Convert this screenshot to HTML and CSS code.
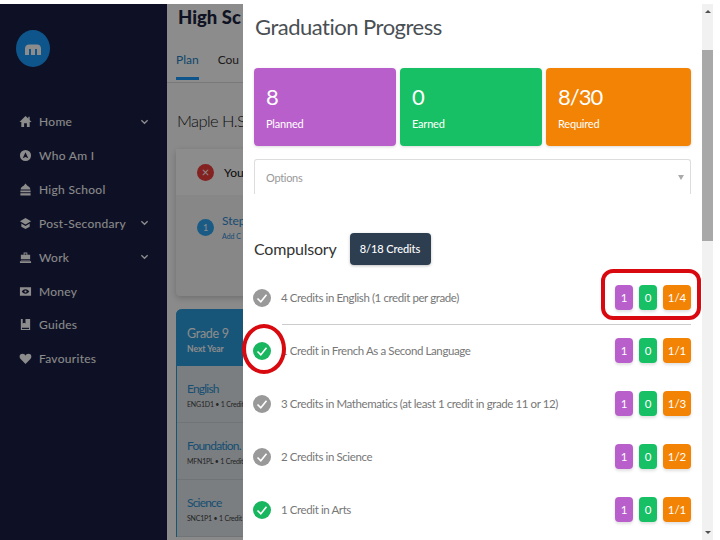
FILE: index.html
```html
<!DOCTYPE html>
<html lang="en">
<head>
    <meta charset="UTF-8">
    <meta name="viewport" content="width=device-width, initial-scale=1.0">
    <title>Graduation Progress</title>
    <link rel="stylesheet" href="styles.css">
</head>
<body>
    <div class="page">
        <!-- Dimmed app behind the modal -->
        <div class="behind">
            <aside class="sidebar">
                <div class="logo">
                    <svg viewBox="0 0 20 14" width="20" height="14"><path d="M2 13V6.5C2 4 4 2.5 6 2.5h8c2.4 0 4 1.600 4 4V13h-4V7h-2v6H8V7H6v6z" fill="#fff"/></svg>
                </div>
                <nav class="nav">
                    <div class="nav-item">
                        <svg class="nav-icon" viewBox="0 0 14 14"><path d="M7 1 0.500 7.500H2.500V13H5.500V9H8.500V13H11.500V7.500H13.500L11.500 5.300V2H10V3.800z"/></svg>
                        <span>Home</span>
                        <svg class="chev" viewBox="0 0 10 6"><path d="M1.500 1 5 4.500 8.500 1"/></svg>
                    </div>
                    <div class="nav-item">
                        <svg class="nav-icon" viewBox="0 0 14 14"><path fill-rule="evenodd" d="M7 1a6 6 0 1 0 0 12A6 6 0 0 0 7 1zM7 3.500 10 10 7 8.500 4 10z"/></svg>
                        <span>Who Am I</span>
                    </div>
                    <div class="nav-item">
                        <svg class="nav-icon" viewBox="0 0 14 14"><path d="M7 0.500 9 3C11 3.800 12 5 12.300 7H1.700C2 5 3 3.800 5 3zM1.500 8.200H12.500V10H1.500zM1.500 11H12.500V13.500H1.500z"/></svg>
                        <span>High School</span>
                    </div>
                    <div class="nav-item">
                        <svg class="nav-icon" viewBox="0 0 14 14"><path d="M7 1 13 4.500 7 8 1 4.500zM2.500 7 7 9.600 11.500 7V10.500L7 13 2.500 10.500z"/></svg>
                        <span>Post-Secondary</span>
                        <svg class="chev" viewBox="0 0 10 6"><path d="M1.500 1 5 4.500 8.500 1"/></svg>
                    </div>
                    <div class="nav-item">
                        <svg class="nav-icon" viewBox="0 0 14 14"><path d="M5 1.500H9V4H8V2.700H6V4H5zM2 4H12V8.500H2zM1 11H13V13H1zM2 9.300H12V10.300H2z"/></svg>
                        <span>Work</span>
                        <svg class="chev" viewBox="0 0 10 6"><path d="M1.500 1 5 4.500 8.500 1"/></svg>
                    </div>
                    <div class="nav-item">
                        <svg class="nav-icon" viewBox="0 0 14 14"><path fill-rule="evenodd" d="M1 2.500H13V11.500H1zM7 4.500C5 4.500 3.600 6 3 7 3.600 8 5 9.500 7 9.500S10.400 8 11 7C10.400 6 9 4.500 7 4.500zM7 5.800a1.200 1.200 0 1 1 0 2.400 1.200 1.200 0 0 1 0-2.400z"/></svg>
                        <span>Money</span>
                    </div>
                    <div class="nav-item">
                        <svg class="nav-icon" viewBox="0 0 14 14"><path fill-rule="evenodd" d="M2 1H4V6L5.500 5 7 6V1H12V13H2zM3.200 10.500V11.800H10.800V10.500z"/></svg>
                        <span>Guides</span>
                    </div>
                    <div class="nav-item">
                        <svg class="nav-icon" viewBox="0 0 14 14"><path d="M7 13 1.500 7.300C0 5.500 0.500 2 3.800 2 5.300 2 6.400 2.800 7 4 7.600 2.800 8.700 2 10.200 2 13.500 2 14 5.500 12.500 7.300z"/></svg>
                        <span>Favourites</span>
                    </div>
                </nav>
            </aside>
            <main class="plan">
                <div class="plan-head">
                    <div class="plan-title">High Sc</div>
                    <div class="tabs">
                        <span class="tab tab-active">Plan</span>
                        <span class="tab">Cou</span>
                    </div>
                </div>
                <div class="plan-body">
                    <div class="school">Maple H.S</div>
                    <div class="alert-card">
                        <div class="alert-top">
                            <span class="alert-icon">&times;</span>
                            <span>You</span>
                        </div>
                        <div class="alert-step">
                            <span class="step-num">1</span>
                            <div>
                                <div class="step-title">Step</div>
                                <div class="step-sub">Add C</div>
                            </div>
                        </div>
                    </div>
                    <div class="grade">
                        <div class="grade-head">
                            <div class="grade-name">Grade 9</div>
                            <div class="grade-when">Next Year</div>
                        </div>
                        <div class="course">
                            <div class="course-name">English</div>
                            <div class="course-sub">ENG1D1 &bull; 1 Credit</div>
                        </div>
                        <div class="course">
                            <div class="course-name">Foundation.</div>
                            <div class="course-sub">MFN1PL &bull; 1 Credit</div>
                        </div>
                        <div class="course">
                            <div class="course-name">Science</div>
                            <div class="course-sub">SNC1P1 &bull; 1 Credit</div>
                        </div>
                    </div>
                </div>
            </main>
        </div>

        <section class="modal">
            <h1 class="modal-title">Graduation Progress</h1>
            <div class="stats">
                <div class="stat stat-planned"><div class="stat-num">8</div><div class="stat-label">Planned</div></div>
                <div class="stat stat-earned"><div class="stat-num">0</div><div class="stat-label">Earned</div></div>
                <div class="stat stat-required"><div class="stat-num">8/30</div><div class="stat-label">Required</div></div>
            </div>
            <div class="options"><span>Options</span><i class="caret"></i></div>
            <div class="group-head">
                <h2>Compulsory</h2>
                <span class="credits">8/18 Credits</span>
            </div>
            <div class="req req-line">
                <span class="check check-grey"><svg viewBox="0 0 18 18"><path d="M4.500 9.500 7.800 12.800 13.500 5.800"/></svg></span>
                <span class="req-text">4 Credits in English (1 credit per grade)</span>
                <span class="pill pill-p">1</span><span class="pill pill-g">0</span><span class="pill pill-o">1/4</span>
            </div>
            <div class="req">
                <span class="check check-green"><svg viewBox="0 0 18 18"><path d="M4.500 9.500 7.800 12.800 13.500 5.800"/></svg></span>
                <span class="req-text">1 Credit in French As a Second Language</span>
                <span class="pill pill-p">1</span><span class="pill pill-g">0</span><span class="pill pill-o">1/1</span>
            </div>
            <div class="req">
                <span class="check check-grey"><svg viewBox="0 0 18 18"><path d="M4.500 9.500 7.800 12.800 13.500 5.800"/></svg></span>
                <span class="req-text">3 Credits in Mathematics (at least 1 credit in grade 11 or 12)</span>
                <span class="pill pill-p">1</span><span class="pill pill-g">0</span><span class="pill pill-o">1/3</span>
            </div>
            <div class="req">
                <span class="check check-grey"><svg viewBox="0 0 18 18"><path d="M4.500 9.500 7.800 12.800 13.500 5.800"/></svg></span>
                <span class="req-text">2 Credits in Science</span>
                <span class="pill pill-p">1</span><span class="pill pill-g">0</span><span class="pill pill-o">1/2</span>
            </div>
            <div class="req">
                <span class="check check-green"><svg viewBox="0 0 18 18"><path d="M4.500 9.500 7.800 12.800 13.500 5.800"/></svg></span>
                <span class="req-text">1 Credit in Arts</span>
                <span class="pill pill-p">1</span><span class="pill pill-g">0</span><span class="pill pill-o">1/1</span>
            </div>
        </section>

        <div class="scrollbar">
            <div class="scroll-btn"><i class="arrow-up"></i></div>
            <div class="scroll-thumb"></div>
            <div class="scroll-rest"><i class="arrow-down"></i></div>
        </div>

        <!-- Red hand-drawn marks on top of the screenshot -->
        <div class="mark-box"></div>
        <div class="mark-ring"></div>
    </div>
</body>
</html>
```

FILE: styles.css
```css
/* Page frame */
html, body {
    margin: 0;
    height: 100%;
    background: white;
}

body {
    font-family: Lato, "Open Sans", sans-serif;
    overflow: hidden;
}

h1, h2 {
    margin: 0;
    font-weight: 400;
}

.page {
    position: relative;
    display: flex;
    height: 536px;
    padding-top: 4px;
    overflow: hidden;
}

/* Dimmed app */
.behind {
    position: relative;
    display: flex;
    width: 243px;
    flex: none;
    overflow: hidden;
}

.behind::after {
    content: "";
    position: absolute;
    inset: 0;
    background: rgba(0, 0, 0, 0.45);
}

.sidebar {
    width: 167px;
    flex: none;
    background: #1b1f45;
    color: white;
}

.logo {
    display: flex;
    align-items: center;
    justify-content: center;
    width: 34px;
    height: 37px;
    margin: 26px 0 0 16px;
    border-radius: 50%;
    background: #1b9bff;
}

.nav {
    margin-top: 38px;
}

.nav-item {
    display: flex;
    align-items: center;
    height: 33.85px;
    padding-left: 19px;
    font-size: 12px;
    letter-spacing: 0.3px;
}

.nav-icon {
    width: 13px;
    height: 13px;
    margin-right: 7px;
    fill: white;
}

.chev {
    width: 9px;
    height: 6px;
    margin-left: auto;
    margin-right: 18px;
    fill: none;
    stroke: white;
    stroke-width: 1.500;
}

.nav-item span {
    white-space: nowrap;
}

.plan {
    width: 76px;
    flex: none;
    background: white;
    white-space: nowrap;
}

.plan-head {
    height: 78px;
    padding-left: 9px;
    border-bottom: 1px solid #ddd;
}

.plan-title {
    padding-left: 2px;
    font-size: 18.500px;
    line-height: 26px;
    font-weight: 900;
    color: #1c2340;
}

.tabs {
    display: flex;
    gap: 19px;
    margin-top: 18px;
    font-size: 12px;
    color: #333;
}

.tab {
    height: 32px;
    line-height: 24px;
    box-sizing: border-box;
}

.tab-active {
    color: #1b7fc4;
    border-bottom: 3px solid #1b9bff;
}

.plan-body {
    background: #fbfbfb;
    padding-left: 9px;
    height: 460px;
}

.school {
    padding: 26px 0 0 1px;
    font-size: 16.500px;
    line-height: 24px;
    letter-spacing: -0.6px;
    font-weight: 300;
    color: #222;
}

.alert-card {
    width: 120px;
    height: 147px;
    margin-top: 16px;
    background: #f6f6f6;
    border-radius: 4px;
    box-shadow: 0 2px 6px rgba(0, 0, 0, 0.2);
}

.alert-top {
    display: flex;
    align-items: center;
    gap: 10px;
    height: 46px;
    padding-left: 21px;
    font-size: 12px;
    color: #111;
    background: white;
}

.alert-icon {
    width: 17px;
    height: 17px;
    border-radius: 50%;
    background: #f03c3c;
    color: white;
    font-size: 13px;
    line-height: 16px;
    text-align: center;
}

.alert-step {
    display: flex;
    gap: 8px;
    padding: 18px 0 0 21px;
}

.step-num {
    width: 17px;
    height: 17px;
    margin-top: 6px;
    border-radius: 50%;
    background: #2ea6f0;
    color: white;
    font-size: 9px;
    line-height: 17px;
    text-align: center;
}

.step-title {
    font-size: 12px;
    line-height: 15px;
    color: #2e8ad0;
}

.step-sub {
    font-size: 7px;
    line-height: 12px;
    margin-top: 2px;
    color: #2e8ad0;
}

.grade {
    width: 120px;
    margin-top: 13px;
    background: #dfe6ea;
    border-radius: 6px 6px 0 0;
    border-left: 1px solid #2c9ad8;
    box-sizing: border-box;
}

.grade-head {
    height: 57px;
    margin-left: -1px;
    padding: 17px 0 0 11px;
    box-sizing: border-box;
    background: #2a9bdc;
    border-radius: 6px 6px 0 0;
    color: white;
}

.grade-name {
    font-size: 12.5px;
    line-height: 16px;
    letter-spacing: -0.3px;
}

.grade-when {
    font-size: 8.5px;
    font-weight: 700;
    line-height: 14px;
}

.course {
    height: 57px;
    padding: 14px 0 0 10px;
    box-sizing: border-box;
    border-bottom: 1px solid #cdd4d8;
}

.course-name {
    font-size: 12px;
    line-height: 18px;
    letter-spacing: -0.8px;
    color: #2a8fd0;
}

.course-sub {
    font-size: 7px;
    line-height: 12px;
    letter-spacing: -0.2px;
    color: #444;
}

/* Modal */
.modal {
    width: 437px;
    flex: none;
    padding: 0 11px;
    background: white;
}

.modal-title {
    height: 44px;
    margin: 0 0 20px 1px;
    font-size: 22px;
    line-height: 46px;
    letter-spacing: -0.5px;
    color: #4a4f54;
}

.stats {
    display: flex;
    gap: 4px;
}

.stat {
    width: 142px;
    height: 78px;
    box-sizing: border-box;
    padding: 16px 0 0 12px;
    border-radius: 4px;
    color: white;
    box-shadow: 0 1px 3px rgba(0, 0, 0, 0.15);
}

.stat-required {
    width: 145px;
}

.stat-planned, .pill-p { background: #b95fcc; }
.stat-earned, .pill-g { background: #17c064; }
.stat-required, .pill-o { background: #f28304; }

.stat-num {
    font-size: 22px;
    line-height: 25px;
    letter-spacing: -1px;
}

.stat-label {
    margin-top: 7px;
    font-size: 11px;
    line-height: 16px;
    letter-spacing: -0.2px;
}

.options {
    display: flex;
    align-items: center;
    justify-content: space-between;
    height: 34px;
    margin-top: 13px;
    padding: 0 6px 0 11px;
    border: 1px solid #ddd;
    border-bottom: none;
    border-radius: 3px 3px 0 0;
    font-size: 11px;
    letter-spacing: -0.3px;
    color: #999;
}

.caret {
    width: 0;
    height: 0;
    border-left: 3px solid transparent;
    border-right: 3px solid transparent;
    border-top: 5px solid #aaa;
}

.group-head {
    display: flex;
    align-items: center;
    gap: 13px;
    height: 32px;
    margin: 39px 0 6px;
}

.group-head h2 {
    margin-top: -2px;
    font-size: 16px;
    letter-spacing: -0.2px;
    color: #333;
}

.credits {
    width: 81px;
    height: 32px;
    border-radius: 4px;
    background: #2c3e50;
    color: white;
    font-size: 11px;
    font-weight: 500;
    letter-spacing: -0.1px;
    line-height: 32px;
    text-align: center;
    box-shadow: 0 1px 3px rgba(0, 0, 0, 0.25);
}

.req {
    display: flex;
    align-items: center;
    height: 53px;
    font-size: 11.500px;
    letter-spacing: -0.4px;
    color: #777;
}

.req-line {
    position: relative;
}

.req-line::after {
    content: "";
    position: absolute;
    left: 28px;
    right: 0;
    bottom: -1px;
    border-bottom: 1px solid #ccc;
}

.check {
    width: 18px;
    height: 18px;
    margin: 0 10px 0 -1px;
    flex: none;
    border-radius: 50%;
}

.check svg {
    display: block;
    fill: none;
    stroke: white;
    stroke-width: 1.600;
}

.check-grey { background: #999; }
.check-green { background: #18b65f; }

.req-text {
    flex: 1;
    white-space: nowrap;
}

.pill {
    width: 18px;
    height: 25px;
    margin-left: 6px;
    border-radius: 4px;
    color: white;
    font-size: 11.500px;
    letter-spacing: 0;
    line-height: 25px;
    text-align: center;
    box-shadow: 0 2px 3px rgba(0, 0, 0, 0.12);
}

.pill-o {
    width: 28px;
}

/* Scrollbar */
.scrollbar {
    display: flex;
    flex-direction: column;
    width: 11px;
    flex: none;
    background: #f1f1f1;
}

.scroll-btn {
    height: 46px;
    flex: none;
}

.arrow-up, .arrow-down {
    display: block;
    width: 0;
    height: 0;
    margin: 0 auto;
    border-left: 3px solid transparent;
    border-right: 3px solid transparent;
}

.arrow-up {
    margin-top: 6px;
    border-bottom: 3px solid #505050;
}

.scroll-thumb {
    height: 191px;
    flex: none;
    background: #a8a8a8;
}

.scroll-rest {
    display: flex;
    flex: 1;
    flex-direction: column;
    justify-content: flex-end;
}

.arrow-down {
    margin-bottom: 6px;
    border-top: 3px solid #505050;
}

/* Red marks */
.mark-box {
    position: absolute;
    left: 601px;
    top: 269px;
    width: 92px;
    height: 43px;
    border: 4px solid #d80a10;
    border-radius: 12px;
}

.mark-ring {
    position: absolute;
    left: 242px;
    top: 324px;
    width: 36px;
    height: 42px;
    border: 4px solid #d80a10;
    border-radius: 50%;
}
```
